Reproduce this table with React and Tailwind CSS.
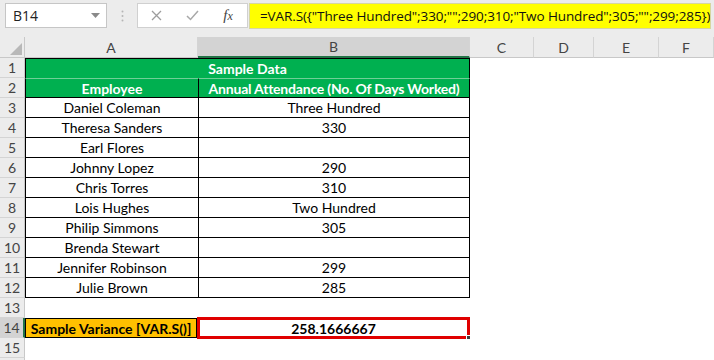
const ROWS = [
    { n: 3, a: 'Daniel Coleman', b: 'Three Hundred' },
    { n: 4, a: 'Theresa Sanders', b: '330' },
    { n: 5, a: 'Earl Flores', b: '' },
    { n: 6, a: 'Johnny Lopez', b: '290' },
    { n: 7, a: 'Chris Torres', b: '310' },
    { n: 8, a: 'Lois Hughes', b: 'Two Hundred' },
    { n: 9, a: 'Philip Simmons', b: '305' },
    { n: 10, a: 'Brenda Stewart', b: '' },
    { n: 11, a: 'Jennifer Robinson', b: '299' },
    { n: 12, a: 'Julie Brown', b: '285' },
];

const FORMULA = '=VAR.S({"Three Hundred";330;"";290;310;"Two Hundred";305;"";299;285})';

function RowHead({ n, active }) {
    return (
        <div
            className={
                'w-[25px] h-full shrink-0 flex items-center justify-center border-b border-[#d4d4d4] text-[14px] text-[#444] ' +
                (active ? 'bg-[#d3d3d3] border-r-2 border-r-[#217346]' : 'bg-[#ececec] border-r border-r-[#c8c8c8]')
            }
        >
            {n}
        </div>
    );
}

function FormulaBar() {
    return (
        <div className="h-[37px] bg-[#ececec] flex items-start pt-[3px]" style={{ fontFamily: '"Open Sans", "Noto Sans", sans-serif' }}>
            <div className="ml-[5px] w-[102px] h-[25px] bg-white border border-[#c6c6c6] flex items-center justify-between pl-[7px] pr-[6px]">
                <span className="text-[14px] text-[#222]">B14</span>
                <svg width="9" height="5" viewBox="0 0 9 5"><path d="M0 0h9L4.5 5z" fill="#8a8a8a" /></svg>
            </div>
            <div className="w-[30px] h-[25px] flex items-center justify-center">
                <svg width="3" height="12" viewBox="0 0 3 12">
                    <circle cx="1.5" cy="1.5" r="1" fill="#b5b5b5" />
                    <circle cx="1.5" cy="6" r="1" fill="#b5b5b5" />
                    <circle cx="1.5" cy="10.5" r="1" fill="#b5b5b5" />
                </svg>
            </div>
            <div className="w-[111px] h-[25px] bg-white border border-[#d0d0d0] flex items-center">
                <div className="w-[36px] flex justify-center">
                    <svg width="11" height="11" viewBox="0 0 11 11"><path d="M1 1l9 9M10 1l-9 9" stroke="#9d9d9d" strokeWidth="1.3" /></svg>
                </div>
                <div className="w-[36px] flex justify-center">
                    <svg width="13" height="11" viewBox="0 0 13 11"><path d="M1 6l3.5 3.5L12 1" stroke="#a8a8a8" strokeWidth="1.5" fill="none" /></svg>
                </div>
                <div className="w-[36px] flex justify-center">
                    <span className="text-[15px] italic text-[#444]" style={{ fontFamily: '"Liberation Serif", serif' }}>f<span className="text-[12px]">x</span></span>
                </div>
            </div>
            <div className="ml-[1px] w-[462px] h-[26px] bg-[#ffff00] border border-[#d6d6a0] flex items-center pl-[10px] overflow-hidden whitespace-nowrap">
                <span className="text-[13.5px] text-[#111] tracking-[-0.1px]">{FORMULA}</span>
            </div>
        </div>
    );
}

function ColHeads() {
    const cols = [
        { l: 'A', w: 'w-[173px]' },
        { l: 'B', w: 'w-[272px]', active: true },
        { l: 'C', w: 'w-[64px]' },
        { l: 'D', w: 'w-[60px]' },
        { l: 'E', w: 'w-[65px]' },
        { l: 'F', w: 'flex-1' },
    ];
    return (
        <div className="h-[21px] flex">
            <div className="w-[25px] shrink-0 bg-[#ececec] border-r border-b border-[#c8c8c8] flex items-end justify-end p-[2px]">
                <svg width="12" height="12" viewBox="0 0 12 12"><path d="M12 0v12H0z" fill="#b8b8b8" /></svg>
            </div>
            {cols.map((c) => (
                <div
                    key={c.l}
                    className={
                        c.w + ' shrink-0 flex items-center justify-center text-[14px] text-[#444] border-r border-[#d4d4d4] ' +
                        (c.active ? 'bg-[#d3d3d3] border-b-2 border-b-[#217346]' : 'bg-[#ececec] border-b border-b-[#c8c8c8]')
                    }
                >
                    {c.l}
                </div>
            ))}
        </div>
    );
}

export default function App() {
    return (
        <div className="w-[714px] h-[360px] overflow-hidden bg-white" style={{ fontFamily: 'Lato, "Liberation Sans", sans-serif' }}>
            <FormulaBar />
            <ColHeads />

            {/* row 1 */}
            <div className="h-[20px] flex">
                <RowHead n={1} />
                <div className="w-[445px] bg-[#00b050] border-x border-t border-black flex items-center justify-center text-white font-bold text-[14px]">
                    Sample Data
                </div>
            </div>
            {/* row 2 */}
            <div className="h-[20px] flex">
                <RowHead n={2} />
                <div className="w-[173px] bg-[#00b050] border-l border-t border-b border-black border-t-[#6fcf97] flex items-center justify-center text-white font-bold text-[14px]">
                    Employee
                </div>
                <div className="w-[272px] bg-[#00b050] border border-black border-t-[#6fcf97] flex items-center justify-center text-white font-bold text-[14px] whitespace-nowrap tracking-[-0.2px]">
                    Annual Attendance (No. Of Days Worked)
                </div>
            </div>

            {ROWS.map((r) => (
                <div key={r.n} className="h-[20px] flex">
                    <RowHead n={r.n} />
                    <div className="w-[173px] border-l border-b border-black flex items-center justify-center text-[14px] text-black">
                        {r.a}
                    </div>
                    <div className="w-[272px] border-x border-b border-black flex items-center justify-center text-[14px] text-black">
                        {r.b}
                    </div>
                </div>
            ))}

            <div className="h-[20px] flex">
                <RowHead n={13} />
            </div>
            <div className="h-[20px] flex">
                <RowHead n={14} active />
                <div className="w-[172px] bg-[#ffc000] border border-black flex items-center justify-center font-bold text-[14px] text-black whitespace-nowrap">
                    Sample Variance [VAR.S()]
                </div>
                <div className="relative w-[273px] -mt-[1px] h-[22px] border-[3px] border-[#e00000] flex items-center justify-center font-bold text-[14px] text-black">
                    258.1666667
                    <div className="absolute -right-[4px] -bottom-[4px] w-[5px] h-[5px] bg-[#3c3c3c] border border-white" />
                </div>
            </div>
            <div className="h-[20px] flex">
                <RowHead n={15} />
            </div>
            <div className="h-[20px] flex">
                <RowHead n="" />
            </div>
        </div>
    );
}
